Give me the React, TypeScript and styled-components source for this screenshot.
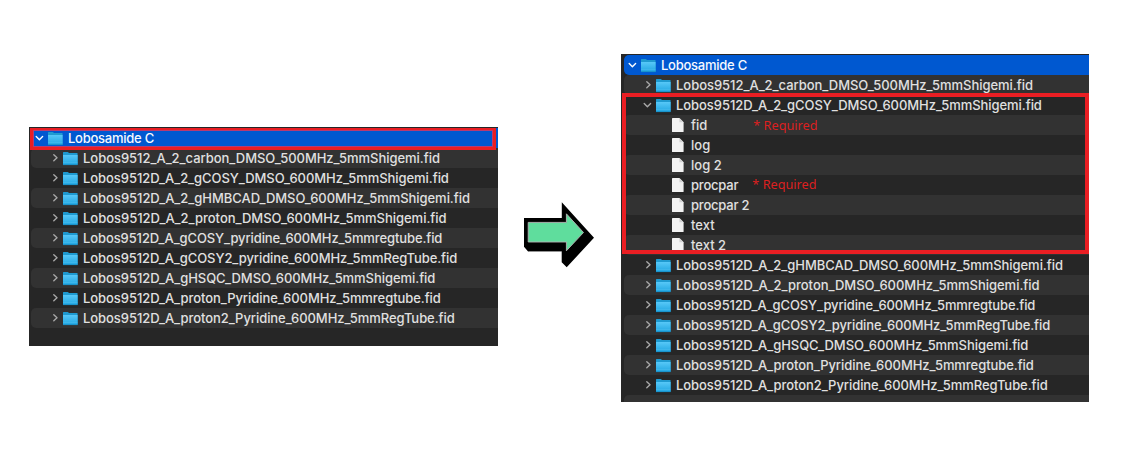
import React from "react";
import styled, { createGlobalStyle } from "styled-components";

const GlobalStyle = createGlobalStyle`
  body { margin: 0; background: #fff; }
  * { box-sizing: border-box; }
`;

const Page = styled.main`
  display: flex;
  align-items: flex-start;
  width: 1123px;
  height: 458px;
  padding-left: 29px;
  overflow: hidden;
  font-family: Inter, "Liberation Sans", sans-serif;
`;

const Panel = styled.section<{ $top: number; $width: number; $height: number; $inset: number }>`
  position: relative;
  flex: none;
  width: ${(p) => p.$width}px;
  height: ${(p) => p.$height}px;
  margin-top: ${(p) => p.$top}px;
  padding: 1px 0 0 ${(p) => p.$inset}px;
  overflow: hidden;
  background: #262626;
`;

const Row = styled.div<{ $tone: "header" | "light" | "dark"; $indent: number }>`
  display: flex;
  align-items: center;
  height: 20px;
  padding-left: ${(p) => p.$indent}px;
  border-radius: 5px 0 0 5px;
  background: ${(p) => ({ header: "#0058d0", light: "#323232", dark: "transparent" })[p.$tone]};
`;

const Label = styled.span<{ $header?: boolean; $track?: number }>`
  font-size: 13px;
  line-height: 20px;
  font-weight: 500;
  letter-spacing: ${(p) => p.$track ?? 0}px;
  color: ${(p) => (p.$header ? "#f6f9ff" : "#e0e0e0")};
  white-space: pre;
`;

const Required = styled.span<{ $gap: number; $lift: number }>`
  margin: 0 0 ${(p) => p.$lift * 2}px ${(p) => p.$gap}px;
  font: 12.7px/18px "Noto Sans", "Open Sans", sans-serif;
  color: #dc2020;
  white-space: pre;
`;

const Chevron = styled.svg`
  flex: none;
  width: 10px;
  height: 10px;
  margin-right: 4px;
  fill: none;
  stroke-width: 1.4;
  stroke-linecap: round;
  stroke-linejoin: round;
`;

const FolderSvg = styled.svg`
  flex: none;
  width: 15px;
  height: 16px;
  margin-right: 5px;
`;

const FileSvg = styled.svg`
  flex: none;
  width: 13px;
  height: 16px;
  margin-right: 7px;
`;

const Highlight = styled.div<{ $x: number; $y: number; $w: number; $h: number; $line: string; $inner: string }>`
  position: absolute;
  left: ${(p) => p.$x}px;
  top: ${(p) => p.$y}px;
  width: ${(p) => p.$w}px;
  height: ${(p) => p.$h}px;
  border: solid #ea1e23;
  border-width: ${(p) => p.$line};
  box-shadow: inset 0 0 0 1px ${(p) => p.$inner};
`;

const ArrowSvg = styled.svg`
  flex: none;
  width: 72px;
  height: 68px;
  margin: 201px 27px 0 24px;
`;

const Disclosure = ({ open, header }: { open?: boolean; header?: boolean }) => (
  <Chevron viewBox="0 0 10 10" stroke={header ? "#fff" : "#a8a8a8"}>
    <path d={open ? "M2.2 3.6 5.4 6.7 8.6 3.6" : "M4.8 1.8 8 4.8 4.8 7.8"} />
  </Chevron>
);

const Folder = () => (
  <FolderSvg viewBox="0 0 15 16">
    <path d="M0 2.6Q0 2 .6 2H4.6Q5.1 2 5.5 2.4L6 3H14.2Q14.6 3 14.6 3.4V15H0Z" fill="#1f9ad0" />
    <path d="M0 5H14.6V14.6H0Z" fill="url(#folderFront)" />
    <path d="M0 12.5H14.6" stroke="#6fd3fb" strokeWidth=".6" opacity=".4" />
    <path d="M0 14.7H14.6" stroke="#1484bd" strokeWidth=".6" />
  </FolderSvg>
);

const File = () => (
  <FileSvg viewBox="0 0 13 16">
    <path d="M1 1.6Q1 1 1.6 1H8.4L12.6 5.2V14.4Q12.6 15 12 15H1.6Q1 15 1 14.4Z" fill="#f2f2f2" />
    <path d="M8.4 1V5.2H12.6Z" fill="#d2d2d2" />
  </FileSvg>
);

type Item = { name: string; kind?: "file"; open?: boolean; required?: number; lift?: number; track?: number };

const carbon: Item = { name: "Lobos9512_A_2_carbon_DMSO_500MHz_5mmShigemi.fid", track: -0.03 };
const cosy: Item = { name: "Lobos9512D_A_2_gCOSY_DMSO_600MHz_5mmShigemi.fid", track: -0.055 };
const rest: Item[] = [
  { name: "Lobos9512D_A_2_gHMBCAD_DMSO_600MHz_5mmShigemi.fid", track: -0.04 },
  { name: "Lobos9512D_A_2_proton_DMSO_600MHz_5mmShigemi.fid", track: -0.02 },
  { name: "Lobos9512D_A_gCOSY_pyridine_600MHz_5mmregtube.fid", track: -0.1 },
  { name: "Lobos9512D_A_gCOSY2_pyridine_600MHz_5mmRegTube.fid", track: -0.08 },
  { name: "Lobos9512D_A_gHSQC_DMSO_600MHz_5mmShigemi.fid", track: -0.05 },
  { name: "Lobos9512D_A_proton_Pyridine_600MHz_5mmregtube.fid", track: -0.06 },
  { name: "Lobos9512D_A_proton2_Pyridine_600MHz_5mmRegTube.fid", track: -0.06 },
];
const files: Item[] = [
  { name: "fid", kind: "file", required: 46 },
  { name: "log", kind: "file" },
  { name: "log 2", kind: "file" },
  { name: "procpar", kind: "file", required: 14, lift: 1, track: -0.2 },
  { name: "procpar 2", kind: "file", track: -0.2 },
  { name: "text", kind: "file" },
  { name: "text 2", kind: "file" },
];

const Tree = ({ items }: { items: Item[] }) => (
  <>
    <Row $tone="header" $indent={3}>
      <Disclosure open header />
      <Folder />
      <Label $header $track={-0.25}>Lobosamide C</Label>
    </Row>
    {items.map((item, i) => (
      <Row key={item.name} $tone={i % 2 ? "dark" : "light"} $indent={item.kind ? 47 : 18}>
        {item.kind ? (
          <File />
        ) : (
          <>
            <Disclosure open={item.open} />
            <Folder />
          </>
        )}
        <Label $track={item.track}>{item.name}</Label>
        {item.required !== undefined && (
          <Required $gap={item.required} $lift={item.lift ?? 0}>* Required</Required>
        )}
      </Row>
    ))}
  </>
);

export default function App() {
  return (
    <Page>
      <GlobalStyle />
      <Panel $top={127} $width={469} $height={219} $inset={2}>
        <Tree items={[carbon, cosy, ...rest]} />
        <Highlight $x={1} $y={1} $w={466} $h={22} $line="2px 3px 3px 3px" $inner="#b83a72" />
      </Panel>
      <ArrowSvg viewBox="522 201 72 68">
        <path d="M524 218H561.8V202.3L594 237.7 566.7 267.3 561.7 262.3V251.7H528.3L524 246.7Z" fill="#000" />
        <path d="M528.2 251.5H561.7" stroke="#aaa" strokeWidth=".8" />
        <path
          d="M528.2 222.4H566.4V213.8L583.5 232.5 566.4 250.8V242H528.2Z"
          fill="#5fdd9d"
          stroke="#b5b5b5"
          strokeWidth=".9"
        />
      </ArrowSvg>
      <Panel $top={54} $width={468} $height={348} $inset={3}>
        <Tree items={[carbon, { ...cosy, open: true }, ...files, ...rest]} />
        <Row $tone="light" $indent={0} />
        <Highlight $x={1} $y={39} $w={467} $h={161} $line="4px" $inner="transparent" />
      </Panel>
      <svg width="0" height="0">
        <defs>
          <linearGradient id="folderFront" x1="0" y1="0" x2="0" y2="1">
            <stop offset="0" stopColor="#57c8f8" />
            <stop offset="1" stopColor="#22a7e2" />
          </linearGradient>
        </defs>
      </svg>
    </Page>
  );
}
